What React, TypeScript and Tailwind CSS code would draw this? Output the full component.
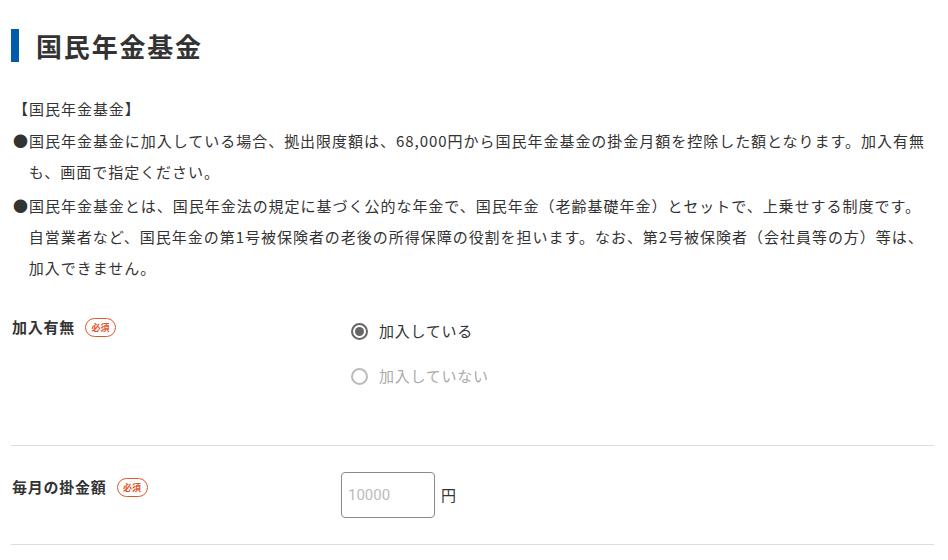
import { useState } from 'react';

function Required() {
  return (
    <span className="ml-[10px] inline-flex h-[19px] w-[31px] items-center justify-center rounded-full border border-[#e0562c] text-[9px] font-bold leading-none tracking-normal text-[#e0562c]">
      必須
    </span>
  );
}

function Radio({ checked, label }: { checked: boolean; label: string }) {
  return (
    <label className="flex items-center gap-[11px] leading-[30px]">
      <span
        className={
          checked
            ? 'flex h-[17px] w-[17px] items-center justify-center rounded-full border-[2px] border-[#666]'
            : 'flex h-[17px] w-[17px] items-center justify-center rounded-full border-[2px] border-[#bbb]'
        }
      >
        {checked && <span className="h-[9px] w-[9px] rounded-full bg-[#666]" />}
      </span>
      <span className={checked ? 'text-[#333]' : 'text-[#aaa]'}>{label}</span>
    </label>
  );
}

export default function App() {
  const [amount, setAmount] = useState('');

  return (
    <div
      className="min-h-[560px] bg-white pl-[11px] pr-[14px] text-[15px] tracking-[0.05em] text-[#333]"
      style={{ fontFamily: '"Noto Sans CJK JP", "Noto Sans", sans-serif' }}
    >
      {/* 見出し */}
      <div className="pt-[29px]">
        <h1 className="flex h-[33px] items-center border-l-[8px] border-[#005bac] pl-[17px] text-[26px] font-bold leading-[33px] tracking-[0.07em] text-[#333]">
          国民年金基金
        </h1>
      </div>

      {/* 説明文 */}
      <div className="mt-[31px] pl-[2px] pr-[8px] leading-[31px] tracking-[0.065em]">
        <p>【国民年金基金】</p>
        <p className="mt-[1px] pl-[1.05em] -indent-[1.05em]">
          ●国民年金基金に加入している場合、拠出限度額は、68,000円から国民年金基金の掛金月額を控除した額となります。加入有無も、画面で指定ください。
        </p>
        <p className="mt-[3px] pl-[1.05em] -indent-[1.05em]">
          ●国民年金基金とは、国民年金法の規定に基づく公的な年金で、国民年金（老齢基礎年金）とセットで、上乗せする制度です。
          <br />
          自営業者など、国民年金の第1号被保険者の老後の所得保障の役割を担います。なお、第2号被保険者（会社員等の方）等は、加入できません。
        </p>
      </div>

      {/* 加入有無 */}
      <div className="flex border-b border-[#dcdcdc] pb-[54px] pt-[29px]">
        <div className="flex w-[330px] items-center self-start pl-[1px] leading-[30px]">
          <span className="font-bold">加入有無</span>
          <Required />
        </div>
        <div className="flex flex-col gap-[15px] pl-[10px] pt-[4px]">
          <Radio checked label="加入している" />
          <Radio checked={false} label="加入していない" />
        </div>
      </div>

      {/* 毎月の掛金額 */}
      <div className="flex border-b border-[#dcdcdc] py-[26px]">
        <div className="flex w-[330px] items-center self-start pl-[1px] leading-[30px]">
          <span className="font-bold">毎月の掛金額</span>
          <Required />
        </div>
        <div className="flex items-center gap-[6px]">
          <input
            value={amount}
            onChange={(e) => setAmount(e.target.value)}
            placeholder="10000"
            className="h-[46px] w-[94px] rounded-[4px] border border-[#8a8a8a] px-[6px] text-[15px] tracking-normal text-[#333] outline-none placeholder:text-[#bbb]"
            style={{ fontFamily: 'Roboto, "Noto Sans CJK JP", sans-serif' }}
          />
          <span>円</span>
        </div>
      </div>
    </div>
  );
}
